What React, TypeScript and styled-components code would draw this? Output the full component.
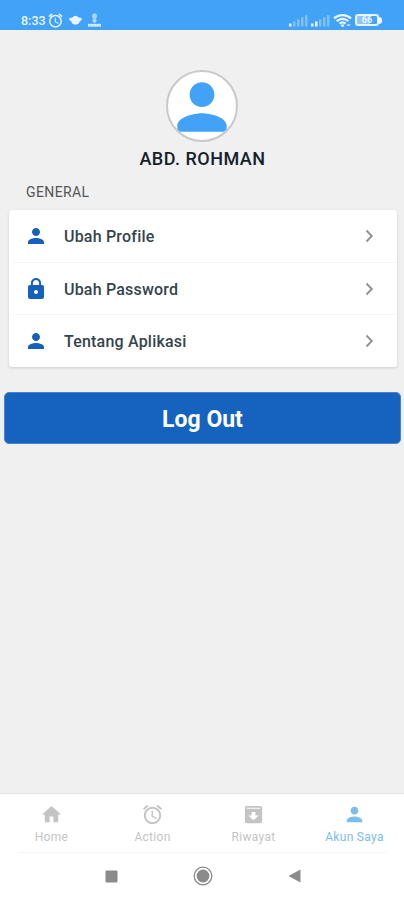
import React from "react";
import styled, { createGlobalStyle } from "styled-components";

const GlobalStyle = createGlobalStyle`
  * { box-sizing: border-box; }
  body { margin: 0; background: #f0f0f0; font-family: Roboto, "Noto Sans", sans-serif; }
`;

const Screen = styled.div`
  width: 404px;
  height: 900px;
  display: flex;
  flex-direction: column;
  background: #f0f0f0;
  overflow: hidden;
`;

const StatusBar = styled.header`
  height: 30px;
  flex: none;
  display: flex;
  justify-content: space-between;
  align-items: flex-end;
  padding: 0 22px 3px 21px;
  background: #42a2f5;
  color: #eaf5ff;
`;

const StatusGroup = styled.div<{ $gap: number }>`
  display: flex;
  align-items: center;
  height: 14px;
  gap: ${(p) => p.$gap}px;
  svg { display: block; flex: none; }
`;

const Clock = styled.span`
  font-size: 12.5px;
  line-height: 14px;
  padding-top: 1px;
  font-weight: 500;
  width: 24px;
  white-space: nowrap;
`;

const Profile = styled.section`
  display: flex;
  flex-direction: column;
  align-items: center;
  padding-top: 40px;
`;

const Avatar = styled.div`
  width: 72px;
  height: 72px;
  border-radius: 50%;
  border: 2.5px solid #c9c9c9;
  background: #fff;
  display: flex;
  align-items: center;
  justify-content: center;
  overflow: hidden;
  color: #42a2f5;
  svg { flex: none; margin-top: 1px; }
`;

const UserName = styled.h1`
  margin: 6px 0 0;
  font-size: 18px;
  line-height: 22px;
  font-weight: 500;
  letter-spacing: 0.5px;
  padding-left: 1px;
  color: #14212b;
`;

const SectionTitle = styled.h2`
  margin: 13px 0 0 26px;
  font-size: 14px;
  line-height: 18px;
  font-weight: 400;
  letter-spacing: 0.4px;
  color: #555;
`;

const Card = styled.div`
  margin: 9px 7px 0 9px;
  height: 157px;
  flex: none;
  border-radius: 3px;
  background: #fff;
  box-shadow: 0 1px 3px rgba(0, 0, 0, 0.15);
  display: flex;
  flex-direction: column;
`;

const Row = styled.button`
  flex: 1;
  margin-left: 5px;
  padding: 0 16px 0 10px;
  border: 0;
  background: none;
  display: flex;
  align-items: center;
  color: #1560bd;
  font-family: inherit;
  & + & { border-top: 1px solid #f5f5f5; }
`;

const RowLabel = styled.span`
  flex: 1;
  margin-left: 16px;
  padding-top: 2px;
  text-align: left;
  font-size: 16px;
  line-height: 20px;
  font-weight: 500;
  letter-spacing: 0.2px;
  color: #35444b;
`;

const LogoutButton = styled.button`
  margin: 25px 3px 0 4px;
  height: 52px;
  padding: 3px 0 0;
  flex: none;
  border: 1px solid #4584cb;
  border-radius: 5px;
  background: #1663bf;
  color: #fff;
  font-family: inherit;
  font-size: 23px;
  line-height: 28px;
  font-weight: 700;
`;

const TabBar = styled.nav`
  margin-top: auto;
  height: 107px;
  flex: none;
  background: #fff;
  border-top: 1px solid #e4e4e4;
  display: flex;
  flex-direction: column;
`;

const Tabs = styled.div`
  height: 58px;
  padding-left: 1px;
  display: grid;
  grid-template-columns: repeat(4, 101px);
`;

const Tab = styled.button<{ $active?: boolean }>`
  border: 0;
  background: none;
  padding: 9px 0 0;
  display: flex;
  flex-direction: column;
  align-items: center;
  font-family: inherit;
  font-size: 12px;
  line-height: 16px;
  letter-spacing: 0.3px;
  white-space: nowrap;
  color: ${(p) => (p.$active ? "#7dbcf0" : "#c4c4c4")};
  svg { display: block; margin-bottom: 3px; }
`;

const SystemNav = styled.div`
  height: 47px;
  margin: 0 17px 0 19px;
  border-top: 1px solid #f5f5f5;
  display: flex;
  align-items: center;
  justify-content: center;
  gap: 75px;
  color: #8b8b8b;
`;

const paths = {
  person:
    "M12 12c2.21 0 4-1.79 4-4s-1.79-4-4-4-4 1.79-4 4 1.79 4 4 4zm0 2c-2.67 0-8 1.34-8 4v2h16v-2c0-2.66-5.33-4-8-4z",
  lock:
    "M18 8h-1V6c0-2.76-2.24-5-5-5S7 3.24 7 6v2H6c-1.1 0-2 .9-2 2v10c0 1.1.9 2 2 2h12c1.1 0 2-.9 2-2V10c0-1.1-.9-2-2-2zm-6 9c-1.1 0-2-.9-2-2s.9-2 2-2 2 .9 2 2-.9 2-2 2zm3.1-9H8.9V6c0-1.71 1.39-3.1 3.1-3.1s3.1 1.39 3.1 3.1v2z",
  home: "M10 20v-6h4v6h5v-8h3L12 3 2 12h3v8z",
  alarm:
    "M22 5.72l-4.6-3.86-1.29 1.53 4.6 3.86L22 5.72zM7.88 3.39L6.6 1.86 2 5.71l1.29 1.53 4.59-3.85zM12.5 8H11v6l4.75 2.85.75-1.23-4-2.37V8zM12 4c-4.97 0-9 4.03-9 9s4.02 9 9 9c4.97 0 9-4.03 9-9s-4.03-9-9-9zm0 16c-3.87 0-7-3.13-7-7s3.13-7 7-7 7 3.13 7 7-3.13 7-7 7z",
  archive:
    "M5 3h14a2 2 0 0 1 2 2v14a2 2 0 0 1-2 2H5a2 2 0 0 1-2-2V5a2 2 0 0 1 2-2zM5 5v1h14V5zM10 9.500v3.500H6.500l5.500 5 5.500-5H14V9.500z",
};

function Icon({ name, size }: { name: keyof typeof paths; size: number }) {
  return (
    <svg width={size} height={size} viewBox="0 0 24 24" fill="currentColor" fillRule="evenodd">
      <path d={paths[name]} />
    </svg>
  );
}

function Signal({ strong }: { strong: number }) {
  return (
    <svg width="19" height="13" viewBox="0 0 19 13" fill="currentColor">
      {[0, 1, 2, 3, 4].map((i) => (
        <rect key={i} x={i * 4} y={9.5 - i * 2.1} width="2.5" height={3 + i * 2.1} opacity={i < strong ? 1 : 0.38} />
      ))}
    </svg>
  );
}

const BatteryLevel = styled.span`
  width: 27px;
  height: 12px;
  display: flex;
  align-items: center;
`;

const BatteryBody = styled.span`
  width: 24px;
  height: 12px;
  border: 2px solid currentColor;
  border-radius: 3px;
  font-size: 9px;
  line-height: 8px;
  font-weight: 700;
  text-align: center;
  background: linear-gradient(90deg, #8ec8fa 65%, transparent 65%);
`;

const BatteryTip = styled.span`
  width: 3px;
  height: 7px;
  border-radius: 0 3px 3px 0;
  background: currentColor;
`;

const rows: { icon: keyof typeof paths; label: string }[] = [
  { icon: "person", label: "Ubah Profile" },
  { icon: "lock", label: "Ubah Password" },
  { icon: "person", label: "Tentang Aplikasi" },
];

export default function App() {
  return (
    <Screen>
      <GlobalStyle />
      <StatusBar>
        <StatusGroup $gap={2}>
          <Clock>8:33</Clock>
          <Icon name="alarm" size={17} />
          <svg width="19" height="14" viewBox="0 0 19 14" fill="currentColor">
            <path d="M3.200 6q0-1.500 3-1.500L8 3.300q1.500-1.100 3 0l1.800 1.200q3 0 3 1.500 0 1.700-2 2.200-1 3.300-3.500 3.300H8.700q-2.500 0-3.500-3.300-2-.5-2-2.200z" />
          </svg>
          <svg width="15" height="15" viewBox="0 0 15 15" fill="none" stroke="currentColor">
            <circle cx="7.500" cy="3" r="2.200" fill="currentColor" opacity=".6" />
            <path d="M7.500 5v5M5.500 7.500h4" strokeWidth="2" opacity=".7" />
            <path d="M1 12.300h13" strokeWidth="3" opacity=".75" />
            <path d="M1 11.800h13" strokeWidth="1" strokeDasharray="2 1" />
          </svg>
        </StatusGroup>
        <StatusGroup $gap={3}>
          <Signal strong={1} />
          <Signal strong={2} />
          <svg width="19" height="15" viewBox="0 0 19 15" fill="none" stroke="currentColor" strokeWidth="2.300">
            <path d="M1 5.300c4.700-4.300 12.300-4.300 17 0M3.700 8.200c3.300-3 8.300-3 11.600 0M6.500 10.700c1.700-1.500 4.300-1.500 6 0" />
            <path d="M8 12h3l-1.500 2zM14 11.500l1.500 1.500 1.500-1.500" fill="currentColor" strokeWidth="1" />
          </svg>
          <BatteryLevel>
            <BatteryBody>66</BatteryBody>
            <BatteryTip />
          </BatteryLevel>
        </StatusGroup>
      </StatusBar>
      <Profile>
        <Avatar><Icon name="person" size={74} /></Avatar>
        <UserName>ABD. ROHMAN</UserName>
      </Profile>
      <SectionTitle>GENERAL</SectionTitle>
      <Card>
        {rows.map((row) => (
          <Row key={row.label}>
            <Icon name={row.icon} size={24} />
            <RowLabel>{row.label}</RowLabel>
            <svg width="24" height="24" viewBox="0 0 24 24" fill="none" stroke="#929292" strokeWidth="1.900">
              <path d="m9.500 6.500 5.300 5.500-5.300 5.500" />
            </svg>
          </Row>
        ))}
      </Card>
      <LogoutButton>Log Out</LogoutButton>
      <TabBar>
        <Tabs>
          <Tab><Icon name="home" size={23} />Home</Tab>
          <Tab><Icon name="alarm" size={23} />Action</Tab>
          <Tab><Icon name="archive" size={23} />Riwayat</Tab>
          <Tab $active><Icon name="person" size={23} />Akun Saya</Tab>
        </Tabs>
        <SystemNav>
          <svg width="13" height="13" viewBox="0 0 13 13"><rect x=".5" y=".5" width="12" height="12" rx="1" fill="currentColor" /></svg>
          <svg width="20" height="20" viewBox="0 0 20 20">
            <circle cx="10" cy="10" r="8.800" fill="none" stroke="currentColor" strokeWidth="1.300" />
            <circle cx="10" cy="10" r="6.400" fill="currentColor" />
          </svg>
          <svg width="13" height="14" viewBox="0 0 13 14"><path d="M.5 7 12.500.5v13z" fill="currentColor" /></svg>
        </SystemNav>
      </TabBar>
    </Screen>
  );
}
